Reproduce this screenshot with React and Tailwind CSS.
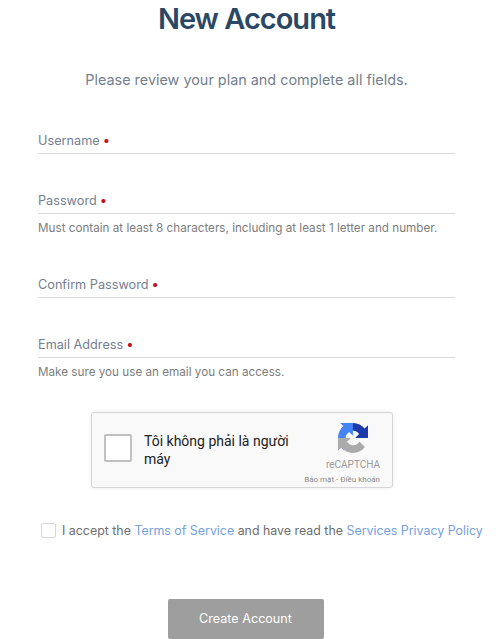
const font = { fontFamily: 'Inter, "Noto Sans", sans-serif' };

function Field({ label, hint, className = "" }) {
  return (
    <div className={className}>
      <div className="flex h-[25px] items-center border-b border-[#d9d9d9] text-[12.7px] leading-none text-[#74808f]">
        <span>{label}</span>
        <span className="ml-[3px] -translate-y-px text-[13px] text-[#c40f1a]">•</span>
      </div>
      {hint && <p className="mt-[6px] h-[16px] whitespace-nowrap text-[11.7px] leading-4 text-[#7d7d7d]">{hint}</p>}
    </div>
  );
}

function RecaptchaLogo() {
  return (
    <svg viewBox="0 0 64 64" className="mr-[12px] h-[30px] w-[30px]">
      <path d="M64 31.955l-.033-1.37V4.687l-7.16 7.16C50.948 4.674 42.033.093 32.05.093c-10.4 0-19.622 4.96-25.458 12.64l11.736 11.86a15.55 15.55 0 0 1 4.754-5.334c2.05-1.6 4.952-2.906 8.968-2.906.485 0 .86.057 1.135.163 4.976.393 9.288 3.14 11.828 7.124l-8.307 8.307c10.522-.04 22.4-.066 27.295.005" fill="#1c3aa9" />
      <path d="M31.862.001l-1.37.033H4.594l7.16 7.16C4.58 13.053 0 21.968 0 31.95c0 10.4 4.96 19.622 12.64 25.458L24.5 45.672a15.55 15.55 0 0 1-5.334-4.754c-1.6-2.05-2.906-4.952-2.906-8.968 0-.485.057-.86.163-1.135.393-4.976 3.14-9.288 7.124-11.828l8.307 8.307c-.04-10.522-.066-22.4.005-27.295" fill="#4285f4" />
      <path d="M.001 31.95l.033 1.37v25.898l7.16-7.16c5.86 7.173 14.775 11.753 24.76 11.753 10.4 0 19.622-4.96 25.458-12.64l-11.736-11.86a15.55 15.55 0 0 1-4.754 5.334c-2.05 1.6-4.952 2.906-8.968 2.906-.485 0-.86-.057-1.135-.163-4.976-.393-9.288-3.14-11.828-7.124l8.307-8.307c-10.522.04-22.4.066-27.295-.005" fill="#ababab" />
    </svg>
  );
}

export default function App() {
  return (
    <div style={font} className="h-[639px] w-[493px] overflow-hidden bg-white">
      <h1 className="h-[38px] text-center text-[29px] font-semibold leading-[38px] tracking-[-1px] text-[#2a4865]">New Account</h1>
      <p className="mt-[32px] h-[20px] text-center text-[14.4px] leading-5 text-[#74808f]">
        Please review your plan and complete all fields.
      </p>
      <div className="ml-[38px] mt-[39px] w-[417px]">
        <Field label="Username" />
        <Field label="Password" hint="Must contain at least 8 characters, including at least 1 letter and number." className="mt-[35px]" />
        <Field label="Confirm Password" className="mt-[37px]" />
        <Field label="Email Address" hint="Make sure you use an email you can access." className="mt-[35px]" />
      </div>
      <div className="ml-[91px] mt-[32px] flex h-[76px] w-[302px] rounded-[3px] border border-[#d6d6d6] bg-[#f9f9f9] shadow-[0_0_4px_rgba(0,0,0,0.08)]">
        <div className="ml-[12px] mt-[21px] h-[28px] w-[28px] shrink-0 rounded-[2px] border-2 border-[#c1c1c1] bg-white" />
        <div style={{ fontFamily: 'Roboto, sans-serif' }} className="ml-[12px] mt-[19px] w-[160px] text-[14px] leading-[18px] text-[#222]">
          Tôi không phải là người máy
        </div>
        <div style={{ fontFamily: 'Roboto, sans-serif' }} className="flex min-w-0 flex-1 flex-col items-end pr-[12px] pt-[10px] text-[#9b9b9b]">
          <RecaptchaLogo />
          <span className="mt-[4px] text-[10px] leading-4">reCAPTCHA</span>
          <span className="mt-[1px] whitespace-nowrap text-[8px] leading-3 text-[#8a8a8a]">Bảo mật - Điều khoản</span>
        </div>
      </div>
      <div className="ml-[41px] mt-[34px] flex h-[17px] items-center whitespace-nowrap text-[12.4px] text-[#6e6e6e]">
        <span className="h-[15px] w-[15px] shrink-0 rounded-[2px] border border-[#d5d8dc] bg-white" />
        <span className="ml-[6px] translate-y-px">
          I accept the <a className="text-[#74a1e0]">Terms of Service</a> and have read the <a className="text-[#74a1e0]">Services Privacy Policy</a>
        </span>
      </div>
      <div className="mt-[60px] flex justify-center">
        <button className="h-[40px] w-[156px] -translate-x-px rounded-[2px] bg-[#9e9e9e] text-[12.6px] text-white">Create Account</button>
      </div>
    </div>
  );
}
